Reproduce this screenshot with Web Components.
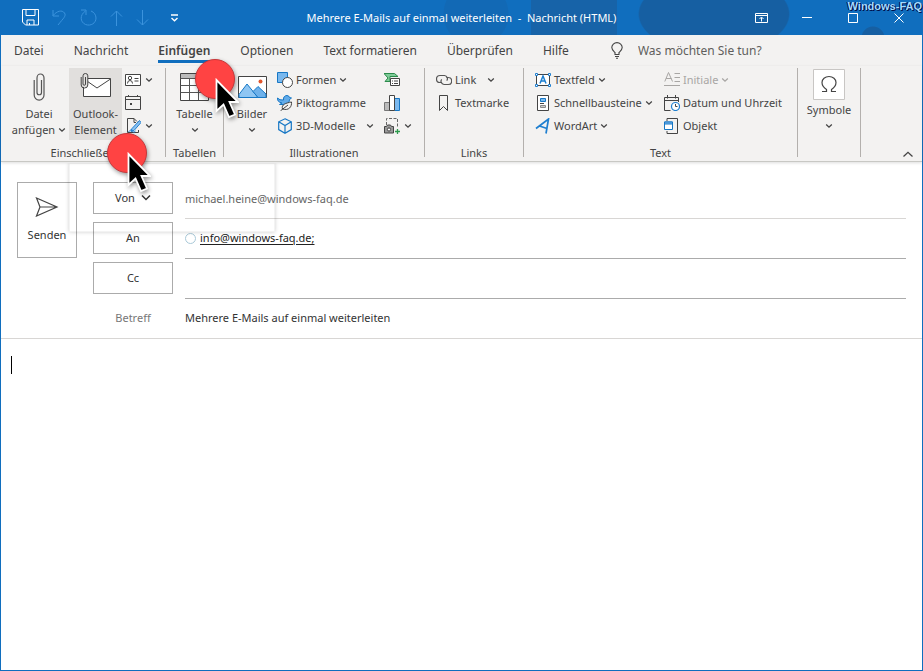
<!DOCTYPE html>
<html lang="de">
<head>
<meta charset="utf-8">
<title>Mehrere E-Mails auf einmal weiterleiten - Nachricht (HTML)</title>
<style>
html, body { margin: 0; }
body { font: 11px/16px "Noto Sans", "Open Sans", sans-serif; color: #444; background: #fff; }
</style>
</head>
<body>
<mail-window>
  <title-bar slot="title"></title-bar>
  <ribbon-tabs slot="tabs"></ribbon-tabs>
  <ribbon-bar slot="ribbon">
    <ribbon-group label="Einschließen" class="include">
      <ribbon-big icon="clip" label="Datei" second="anfügen" drop></ribbon-big>
      <ribbon-big icon="clipmail" label="Outlook-" second="Element" active></ribbon-big>
      <ribbon-stack>
        <ribbon-small icon="card" hint="Visitenkarte" drop></ribbon-small>
        <ribbon-small icon="calendar" hint="Kalender"></ribbon-small>
        <ribbon-small icon="signature" hint="Signatur" drop></ribbon-small>
      </ribbon-stack>
    </ribbon-group>
    <ribbon-group label="Tabellen" class="tables">
      <ribbon-big icon="table" label="Tabelle" drop></ribbon-big>
    </ribbon-group>
    <ribbon-group label="Illustrationen" class="pictures">
      <ribbon-big icon="picture" label="Bilder" drop></ribbon-big>
      <ribbon-stack class="wide">
        <ribbon-small icon="shapes" label="Formen" drop></ribbon-small>
        <ribbon-small icon="bird" label="Piktogramme"></ribbon-small>
        <ribbon-small icon="cube" label="3D-Modelle" drop split></ribbon-small>
      </ribbon-stack>
      <ribbon-stack>
        <ribbon-small icon="smartart" hint="SmartArt"></ribbon-small>
        <ribbon-small icon="chart" hint="Diagramm"></ribbon-small>
        <ribbon-small icon="camera" hint="Screenshot" drop></ribbon-small>
      </ribbon-stack>
    </ribbon-group>
    <ribbon-group label="Links" class="links">
      <ribbon-stack>
        <ribbon-small icon="link" label="Link" drop split></ribbon-small>
        <ribbon-small icon="bookmark" label="Textmarke"></ribbon-small>
      </ribbon-stack>
    </ribbon-group>
    <ribbon-group label="Text" class="text">
      <ribbon-stack class="wider">
        <ribbon-small icon="textbox" label="Textfeld" drop></ribbon-small>
        <ribbon-small icon="blocks" label="Schnellbausteine" drop></ribbon-small>
        <ribbon-small icon="wordart" label="WordArt" drop></ribbon-small>
      </ribbon-stack>
      <ribbon-stack>
        <ribbon-small icon="dropcap" label="Initiale" drop off></ribbon-small>
        <ribbon-small icon="datetime" label="Datum und Uhrzeit"></ribbon-small>
        <ribbon-small icon="object" label="Objekt"></ribbon-small>
      </ribbon-stack>
    </ribbon-group>
    <ribbon-group label="" class="symbols">
      <ribbon-big icon="omega" label="Symbole" drop></ribbon-big>
    </ribbon-group>
  </ribbon-bar>
  <mail-header slot="header"></mail-header>
  <mail-body slot="body"></mail-body>
</mail-window>
<fading-panel></fading-panel>
<click-marker style="left:195px;top:59px"></click-marker>
<click-marker style="left:107px;top:133px"></click-marker>

<script>
// name: [width, height, markup]
const ICONS = {
  chev: [8, 6, '<path d="M1.2 1.5 4 4.2 6.8 1.5" stroke="currentColor" stroke-width="1.3"/>'],
  save: [17, 17, '<path d="M.5.5h16v15.5H3.5l-3-3zM4 .5v6h9v-6M5 16v-5h7v5M7.5 16v-2"/>'],
  undo: [15, 17, '<path d="M1 1v6h6M1 6.500C5 2 10 .5 12.500 4c2 3-1 5-6.500 12"/>'],
  redo: [17, 17, '<path d="M1 1h5v5M5.500 2C-.5 6 0 13 5.500 15.500 11 17.500 16 14 16 9c0-3-2-6-5-7"/>'],
  up: [13, 16, '<path d="M6.500 16V1M1 6.500 6.500 1 12 6.500"/>'],
  down: [13, 16, '<path d="M6.500 0v15M1 9.500l5.500 5.500L12 9.500"/>'],
  more: [9, 8, '<path d="M1 1h7M1.500 4l3 2.700L7.500 4" stroke-width="1.4"/>'],
  display: [13, 10, '<path d="M.5.5h12v9H.5zM.5 2.500h12M6.500 8.500V4.500M4.500 6l2-2 2 2"/>'],
  min: [10, 10, '<path d="M0 4.500h10"/>'],
  max: [10, 10, '<path d="M.5.5h9v9h-9z"/>'],
  close: [10, 10, '<path d="M.5.5l9 9M9.500.5l-9 9"/>'],
  bulb: [12, 17, '<path d="M4 12.500v-2C2.500 9 .8 7.800.8 5.600a5.200 5 0 0 1 10.400 0C11.200 7.800 9.500 9 8 10.500v2zM4 14.500h4M5 16.300h2" stroke="#444" stroke-width="1.1"/>'],
  collapse: [12, 7, '<path d="M1.500 5.500 6 1.300l4.500 4.200" stroke="#444" stroke-width="1.300"/>'],
  clip: [12, 30, '<path d="M8.500 8v12.500a2 2 0 0 1-4.500 0V6a3.500 4 0 0 1 7 0v17a4.800 5 0 0 1-9.800 0V8" stroke="#555" stroke-width="1.200"/>'],
  clipmail: [32, 28, '<path d="M3.500 5.500h27v18h-27z" fill="#fff" stroke="#444"/><path d="M4 6l13 9L30.500 6" stroke="#444"/><path d="M0 0h8v14H2z" fill="#e1dfdd" stroke="none"/><path d="M5.500 4v7a1 1 0 0 1-2.500 0V2.800a2.400 2.300 0 0 1 4.800 0V12a3.300 3 0 0 1-6.600 0V4" stroke="#444"/>'],
  card: [16, 16, '<path d="M.5 2.500h15v11H.5z" fill="#fff" stroke="#444"/><circle cx="5" cy="6" r="1.700" stroke="#444"/><path d="M2.500 11.500q0-3 2.500-3t2.500 3M9.500 6.500h4M9.500 9h4" stroke="#444"/>'],
  calendar: [16, 16, '<path d="M.5 1.500h15v13H.5zM.5 4.500h15M3.500 0v2M12.500 0v2" stroke="#444"/><path d="M5 8h2v2H5z" fill="#444" stroke="none"/>'],
  signature: [16, 16, '<path d="M9 .5H2.500v14h11V12M9 .5v4h2M9 .5l3 3" stroke="#444"/><path d="M14.500 2.500 7 10.500l-1 3 3-1 7-8z" fill="#8cc1f0" stroke="#1e7fd0"/><path d="M3.500 14q3-4 4-1t3 0" stroke="#1e7fd0"/>'],
  table: [29, 28, '<path d="M.5.5h28v27H.5z" fill="#fff" stroke="#444"/><path d="M1 1h27v4H1z" fill="#bbb" stroke="none"/><path d="M.5 5.500h28M.5 12.500h28M.5 19.500h28M9.500 5v22M18.500 5v22" stroke="#555"/>'],
  picture: [29, 23, '<path d="M.5.5h28v21H.5z" fill="#fff" stroke="#444"/><path d="M1 18.500 9 8l11 13.500H1z" fill="#8fc6f3" stroke="#1677c5"/><path d="M15 15.500l5-5 8 7.500v3.500h-8z" fill="#6eb1ea" stroke="#1677c5"/><circle cx="22.500" cy="5.500" r="2" fill="#e2562c" stroke="none"/>'],
  shapes: [16, 16, '<path d="M.5.5h10v10H.5z" fill="#79b8ee" stroke="#1677c5"/><circle cx="10.500" cy="10.500" r="5" fill="#fff" stroke="#444"/>'],
  bird: [16, 16, '<path d="M.5 3q2 2.500 6 2C6 2 8 .5 10 .5q2 0 2.500 2l2 .5-2 1.500C12.500 8 10 9.500 7 9.500H2.500L5 8Q0 7 .5 3z" fill="#62abe9" stroke="#1677c5"/><path d="M5.500 14C4 9.500 9 8 14.500 7c.5 4.500-2.500 9-9 7" fill="#f3f2f1" stroke="#444"/><path d="M3.500 15.800 11 10" stroke="#444"/>'],
  cube: [16, 16, '<path d="M8 .8l6.300 3v7.800L8 15.200l-6.300-3.600V3.800zM1.700 3.800 8 7.500l6.300-3.700M8 7.500v7.700" stroke="#1677c5" stroke-width="1.200"/>'],
  smartart: [16, 16, '<path d="M0 1.500h10.500l3.500 3H6v5H1L4 6z" fill="#7fcb98" stroke="#2b8a4b"/><path d="M6.500 6.500h9v7h-9z" fill="#fff" stroke="#444"/><path d="M8 9h1M10 9h4M8 11.500h1M10 11.500h4" stroke="#444"/>'],
  chart: [16, 16, '<path d="M.5 7.500h5v8h-5z" fill="#bbb" stroke="#777"/><path d="M10.500 3.500h5v12h-5z" fill="#7bb9ef" stroke="#1677c5"/><path d="M5.500.5h5v15h-5z" fill="#fff" stroke="#444"/>'],
  camera: [16, 16, '<path d="M2.500 7V.5h11V10" stroke="#666" stroke-dasharray="3 1.500"/><path d="M.5 8.500h2l1-1.500h3l1 1.500h2v6.500h-9z" fill="#999" stroke="#444"/><circle cx="5" cy="11.500" r="1.600" fill="#fff" stroke="#444"/><path d="M13.500 11v5M11 13.500h5" stroke="#2b9a4b" stroke-width="1.300"/>'],
  link: [16, 16, '<path d="M6 10.500H4a3.300 3.300 0 0 1 0-7h4.500a3.200 3.200 0 0 1 2.200 5.200" stroke="#555" stroke-width="1.200"/><path d="M10.500 5.500h1.700a3.300 3.300 0 0 1 0 7H8a3.200 3.200 0 0 1-2.300-5.200" stroke="#555" stroke-width="1.200"/>'],
  bookmark: [16, 16, '<path d="M3.500.5h8v15l-4-4-4 4z" stroke="#444"/>'],
  textbox: [16, 16, '<path d="M1.500 2.500h13v11h-13z" fill="#fff" stroke="#444"/><path d="M5 11.500l3-7.500 3 7.500M6 9h4" stroke="#1e7fd0" stroke-width="1.500"/><path d="M.5 1.500h2v2h-2zM13.500 1.500h2v2h-2zM.5 12.500h2v2h-2zM13.500 12.500h2v2h-2z" fill="#fff" stroke="#1e7fd0"/>'],
  blocks: [16, 16, '<path d="M2.500.5h11v15h-11z" fill="#fff" stroke="#444"/><path d="M5.500 3.500h5v3h-5z" fill="#7bb9ef" stroke="#1677c5"/><path d="M5 8.500h4" stroke="#444"/><path d="M5.500 10.500h5v2h-5z" fill="#ccc" stroke="#888"/>'],
  wordart: [16, 16, '<path d="M1 10.500 13.500 1 11 15.500M4.500 8l7.500 2.500" stroke="#1e7fd0" stroke-width="1.700"/>'],
  dropcap: [16, 16, '<path d="M.8 9.500 4.500.5l4 9M2 6.500h5.500M10.500 1.500H16M10.500 5.500H16M10.500 9.500H16M0 13.500h16"/>'],
  datetime: [16, 16, '<path d="M6.500 15.500h-6v-13h14V7M.5 5.500h14M3.500 0v3.500M11.500 0v3.500" stroke="#444"/><circle cx="11.500" cy="11.500" r="4" fill="#fff" stroke="#1e7fd0" stroke-width="1.200"/><path d="M11.500 9v2.500h2" stroke="#444"/>'],
  object: [16, 16, '<path d="M3 3V.5h10.500v15H3V13" stroke="#444"/><path d="M.5 4h8v7.500h-8z" fill="#fff" stroke="#1677c5"/><path d="M.5 4h8v2h-8z" fill="#7bb9ef" stroke="#1677c5"/>'],
  omega: [32, 32, '<path d="M.5.5h31v30H.5z" fill="#fff" stroke="#c8c6c4"/><path d="M9 22.500h4.500v-2c-3-2-4.500-4-4.500-7C9 10 12 7.500 16 7.500s7 2.500 7 6c0 3-1.500 5-4.500 7v2H23" stroke="#444" stroke-width="1.200"/>'],
  send: [24, 20, '<path d="M1.500 1 22 10 1.500 19 5 10zM5 10h17" stroke="#444" stroke-width="1.200"/>'],
  chevlg: [10, 8, '<path d="M1 1.500l4 4 4-4" stroke="#333" stroke-width="1.500"/>']
};
const BASE = `*{box-sizing:border-box}button,input,textarea{font:inherit;color:inherit;background:none;border:0;padding:0;margin:0;border-radius:0;outline:0}button{white-space:nowrap}`;

function define(name, render) {
  customElements.define(name, class extends HTMLElement {
    constructor() { super(); this.attachShadow({ mode: 'open' }); }
    connectedCallback() { this.shadowRoot.innerHTML = `<style>${BASE}</style>` + render(this); }
  });
}

define('ui-icon', el => {
  const [w, h, body] = ICONS[el.getAttribute('name')];
  return `<style>:host{display:inline-flex;flex:none}svg{display:block}</style>
  <svg width="${w}" height="${h}" viewBox="0 0 ${w} ${h}" fill="none" stroke="currentColor" aria-hidden="true">${body}</svg>`;
});

define('mail-window', () => `<style>
  :host{display:flex;flex-direction:column;min-height:100vh;box-sizing:border-box;border:1px solid #106ebe;border-top:0}
  ::slotted([slot=body]){flex:1}
</style><slot name="title"></slot><slot name="tabs"></slot><slot name="ribbon"></slot><slot name="header"></slot><slot name="body"></slot>`);

define('title-bar', () => `<style>
  :host{display:grid;grid-template-columns:1fr auto 1fr;align-items:center;height:35px;color:#fff;position:relative;
    background:radial-gradient(circle at 872px 38px,#165fa2 11px,transparent 12px),radial-gradient(circle at 475px 14px,#1269b5 32px,transparent 33px),linear-gradient(90deg,transparent 530px,#1763a8 530px,#1763a8 616px,transparent 616px),radial-gradient(ellipse 76px 40px at 713px 14px,#165fa2 98%,transparent),#106ebe}
  .quick{display:flex;align-items:center;gap:13px;padding-left:21px}
  .quick button,.win button{display:flex;align-items:center;justify-content:center}
  .quick :disabled{color:#3b93dd}
  .quick .more{padding-left:8px}
  .win{display:flex;justify-content:flex-end}
  .win button{width:46px;height:35px}
  h1{margin:0;font:inherit;white-space:pre}
  .mark{position:absolute;right:0;top:0;font:bold 11px/12px "Liberation Sans",sans-serif;color:#a5dcff;text-shadow:1px 1px #00104c,-1px 0 #00104c}
</style>
<div class="quick">
  <button aria-label="Speichern"><ui-icon name="save"></ui-icon></button>
  <button aria-label="Rückgängig" disabled><ui-icon name="undo"></ui-icon></button>
  <button aria-label="Wiederholen" disabled><ui-icon name="redo"></ui-icon></button>
  <button aria-label="Vorheriges Element" disabled><ui-icon name="up"></ui-icon></button>
  <button aria-label="Nächstes Element" disabled><ui-icon name="down"></ui-icon></button>
  <button class="more" aria-label="Schnellzugriff anpassen"><ui-icon name="more"></ui-icon></button>
</div>
<h1>Mehrere E-Mails auf einmal weiterleiten  -  Nachricht (HTML)</h1>
<div class="win">
  <button aria-label="Menüband-Anzeigeoptionen"><ui-icon name="display"></ui-icon></button>
  <button aria-label="Minimieren"><ui-icon name="min"></ui-icon></button>
  <button aria-label="Maximieren"><ui-icon name="max"></ui-icon></button>
  <button aria-label="Schließen"><ui-icon name="close"></ui-icon></button>
</div>
<span class="mark">Windows-FAQ</span>`);

define('ribbon-tabs', () => `<style>
  :host{display:flex;height:31px;background:#f3f2f1;font-size:12px;padding-left:13px;gap:30px}
  button{height:28px;padding-top:6px;border-bottom:3px solid transparent}
  [aria-selected=true]{font-weight:600;border-color:#106ebe}
  label{display:flex;align-items:center;gap:15px;padding-left:12px;flex:1}
  input{flex:1;min-width:0}input::placeholder{color:#605e5c;opacity:1}
</style>
${['Datei','Nachricht','Einfügen','Optionen','Text formatieren','Überprüfen','Hilfe'].map(t => `<button role="tab" aria-selected="${t === 'Einfügen'}">${t}</button>`).join('')}
<label><ui-icon name="bulb"></ui-icon><input aria-label="Was möchten Sie tun?" placeholder="Was möchten Sie tun?"></label>`);

define('ribbon-bar', () => `<style>
  :host{display:flex;position:relative;height:96px;box-sizing:border-box;padding-top:2px;background:#f3f2f1;border-bottom:1px solid #c8c8c4;box-shadow:0 1px 3px #0002}
  ::slotted(.include){width:165px;--inset:8px;--big:60px}
  ::slotted(.tables){width:58px;--big:57px}
  ::slotted(.pictures){width:201px;--inset:3px;--big:50px}
  ::slotted(.links){width:99px;--inset:11px}
  ::slotted(.text){width:274px;--inset:11px}
  ::slotted(.symbols){width:63px;--big:62px;--pic:34px}
  .fold{position:absolute;right:8px;bottom:3px;display:flex}
</style><slot></slot><button class="fold" aria-label="Menüband reduzieren"><ui-icon name="collapse"></ui-icon></button>`);

define('ribbon-group', el => `<style>
  :host{display:flex;flex-direction:column;flex:none;box-sizing:border-box;margin:0 0 4px;border-right:1px solid #b3b0ad}
  .items{display:flex;flex:none;height:72px;padding-left:var(--inset,0)}
  .name{text-align:center;line-height:16px;margin-top:5px}
</style><div class="items"><slot></slot></div><div class="name">${el.getAttribute('label')}</div>`);

define('ribbon-stack', () => `<style>
  :host{display:flex;flex-direction:column;flex:none}
  :host(.wide){width:107px}:host(.wider){width:129px}
</style><slot></slot>`);

define('ribbon-big', el => {
  const second = el.getAttribute('second'), drop = el.hasAttribute('drop');
  return `<style>
  :host{display:flex;flex:none;width:var(--big)}
  :host([active]){width:53px;background:#e1dfdd;margin-right:3px}
  button{display:flex;flex-direction:column;align-items:center;width:100%}
  .pic{height:var(--pic,38px);display:flex;align-items:center}
  .line{display:flex;align-items:center;gap:3px;height:16px}
</style><button><span class="pic"><ui-icon name="${el.getAttribute('icon')}"></ui-icon></span>
<span class="line">${el.getAttribute('label')}</span><span class="line">${second || ''}${drop ? '<ui-icon name="chev"></ui-icon>' : ''}</span></button>`;
});

define('ribbon-small', el => `<style>
  :host{display:flex;height:23px}
  button{display:flex;align-items:center;gap:3px;text-align:left}
  :host([hint]) button{gap:4px}
  :host([off]) button{color:#a8a6a4}
  :host([split]) .drop{padding-left:8px}
</style><button${el.hasAttribute('off') ? ' disabled' : ''}${el.hasAttribute('hint') ? ` aria-label="${el.getAttribute('hint')}"` : ''}><ui-icon name="${el.getAttribute('icon')}"></ui-icon>${el.hasAttribute('label') ? `<span>${el.getAttribute('label')}</span>` : ''}${el.hasAttribute('drop') ? '<ui-icon class="drop" name="chev"></ui-icon>' : ''}</button>`);

define('mail-header', () => `<style>
  :host{display:grid;grid-template-columns:60px 80px 1fr;column-gap:16px;padding:20px 16px 0;border-bottom:1px solid #d8d6d4}
  .send{height:76px;border:1px solid #ababab;display:flex;flex-direction:column;align-items:center;justify-content:center;gap:10px;color:#333}
  .rows{grid-column:2/4;display:grid;grid-template-columns:80px 1fr;column-gap:12px}
  .who{height:32px;margin-bottom:8px;border:1px solid #ababab;color:#333;display:flex;align-items:center;justify-content:center;gap:6px}
  .field{height:37px;border-bottom:1px solid #ababab;display:flex;align-items:center;gap:4px;padding-bottom:4px}
  .field.from{border-color:#d8d6d4}
  input{width:100%;height:31px;color:#333}.from input{color:#666}
  a{color:#222;text-underline-offset:2px}
  .dot{width:11px;height:11px;border:1px solid #a9c9d8;border-radius:50%;flex:none}
  label{height:36px;line-height:32px;text-align:center;color:#777}
</style>
<button class="send"><ui-icon name="send"></ui-icon><span>Senden</span></button>
<div class="rows">
  <button class="who">Von <ui-icon name="chevlg"></ui-icon></button><div class="field from"><input aria-label="Von" value="michael.heine@windows-faq.de"></div>
  <button class="who">An</button><div class="field"><span class="dot"></span><a href="mailto:info@windows-faq.de">info@windows-faq.de;</a></div>
  <button class="who">Cc</button><div class="field"><input aria-label="Cc"></div>
  <label for="subject">Betreff</label><input id="subject" value="Mehrere E-Mails auf einmal weiterleiten">
</div>`);

define('mail-body', () => `<style>
  :host{display:flex;position:relative;background:#fff}
  textarea{flex:1;padding:16px 10px;resize:none}
  .caret{position:absolute;left:10px;top:17px;width:1px;height:18px;background:#000}
</style><textarea aria-label="Nachrichtentext"></textarea><span class="caret"></span>`);

define('fading-panel', () => `<style>
  :host{position:absolute;left:69px;top:163px;width:206px;height:69px;box-sizing:border-box;border:1px solid #0000000c;box-shadow:0 0 4px #0003;clip-path:inset(0 -5px -5px);pointer-events:none}
</style>`);

define('click-marker', () => `<style>
  :host{position:absolute;pointer-events:none}svg{display:block;filter:drop-shadow(1px 2px 2px #0006)}
</style><svg width="44" height="62" viewBox="0 0 44 62" aria-hidden="true">
<circle cx="20" cy="20" r="19.500" fill="#ff4343" stroke="#c5373a"/>
<path d="M21.500 21v31l7-6.500 5.500 12.500 6-2.500-5.500-12.500H43z" fill="#000" stroke="#fff" stroke-width="1.800"/></svg>`);
</script>
</body>
</html>
